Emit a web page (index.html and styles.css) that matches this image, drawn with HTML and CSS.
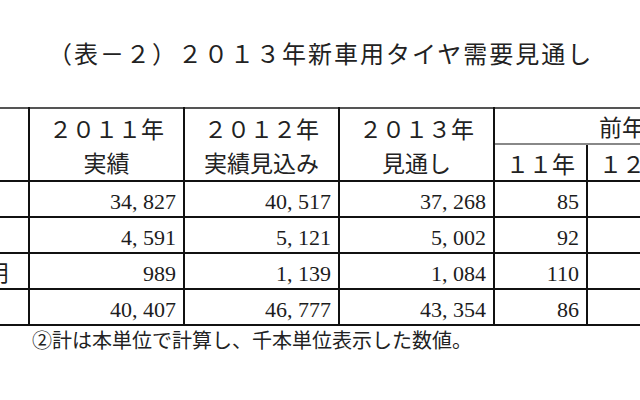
FILE: index.html
```html
<!DOCTYPE html>
<html lang="ja">
<head>
<meta charset="utf-8">
<title>２０１３年新車用タイヤ需要見通し</title>
<link rel="stylesheet" href="styles.css">
</head>
<body>
<div class="page">
  <h1 class="title">（表－２）２０１３年新車用タイヤ需要見通し</h1>
  <table class="demand">
    <colgroup>
      <col class="c-label">
      <col class="c-wide">
      <col class="c-wide">
      <col class="c-wide">
      <col class="c-narrow">
      <col class="c-narrow">
      <col class="c-narrow">
    </colgroup>
    <thead>
      <tr class="h1">
        <th rowspan="2"></th>
        <th rowspan="2">２０１１年<br>実績</th>
        <th rowspan="2">２０１２年<br>実績見込み</th>
        <th rowspan="2">２０１３年<br>見通し</th>
        <th colspan="3" class="group">前年比</th>
      </tr>
      <tr class="h2">
        <th class="sub">１１年</th>
        <th class="sub">１２年</th>
        <th class="sub">１３年</th>
      </tr>
    </thead>
    <tbody>
      <tr>
        <td class="label">乗用車用</td>
        <td>34, 827</td>
        <td>40, 517</td>
        <td>37, 268</td>
        <td>85</td>
        <td>116</td>
        <td>92</td>
      </tr>
      <tr>
        <td class="label">小型トラック用</td>
        <td>4, 591</td>
        <td>5, 121</td>
        <td>5, 002</td>
        <td>92</td>
        <td>112</td>
        <td>98</td>
      </tr>
      <tr>
        <td class="label">トラック・バス用</td>
        <td>989</td>
        <td>1, 139</td>
        <td>1, 084</td>
        <td>110</td>
        <td>115</td>
        <td>95</td>
      </tr>
      <tr>
        <td class="label">計</td>
        <td>40, 407</td>
        <td>46, 777</td>
        <td>43, 354</td>
        <td>86</td>
        <td>116</td>
        <td>93</td>
      </tr>
    </tbody>
  </table>
  <p class="note">②計は本単位で計算し、千本単位表示した数値。</p>
</div>
</body>
</html>
```

FILE: styles.css
```css
html, body {
  margin: 0;
  padding: 0;
  background: #ffffff;
  overflow: hidden;
}

.page {
  width: 640px;
  height: 400px;
  overflow: hidden;
  color: #1c1c1c;
  font-family: "Liberation Serif", "Noto Sans CJK JP", serif;
}

.title {
  margin: 0 0 39px 0;
  padding: 38px 0 0 48px;
  font-family: "Noto Sans CJK JP", sans-serif;
  font-weight: 400;
  font-size: 24px;
  line-height: 30px;
  letter-spacing: 2px;
  white-space: nowrap;
  color: #222;
}

.demand {
  margin-left: -180px;
  border-collapse: collapse;
  table-layout: fixed;
  width: 951px;
}

.c-label { width: 208px; }
.c-wide { width: 155px; }
.c-narrow { width: 93px; }

.demand th,
.demand td {
  border: 2px solid #111;
  padding: 0;
  white-space: nowrap;
  overflow: hidden;
}

.demand thead tr:first-child th {
  border-top-color: #555;
}

.demand th {
  font-family: "Noto Sans CJK JP", sans-serif;
  font-weight: 400;
  font-size: 23px;
  line-height: 34px;
  text-align: center;
  vertical-align: middle;
  color: #222;
}

.demand .h1 th {
  height: 34px;
}

.demand .h2 th {
  height: 35px;
}

.demand th.group {
  border-bottom: 2px solid #888;
}

.demand th.sub {
  border-top: 2px solid #888;
}

.demand td {
  height: 32px;
  font-size: 22px;
  line-height: 24px;
  text-align: right;
  vertical-align: bottom;
  padding: 0 7px 2px 0;
}

.demand td.label {
  font-family: "Noto Sans CJK JP", sans-serif;
  font-size: 23px;
  text-align: left;
  vertical-align: middle;
  padding: 0 0 0 4px;
}

.note {
  margin: 2px 0 0 32px;
  font-family: "Noto Sans CJK JP", sans-serif;
  font-size: 20px;
  line-height: 24px;
  color: #222;
  white-space: nowrap;
}
```
